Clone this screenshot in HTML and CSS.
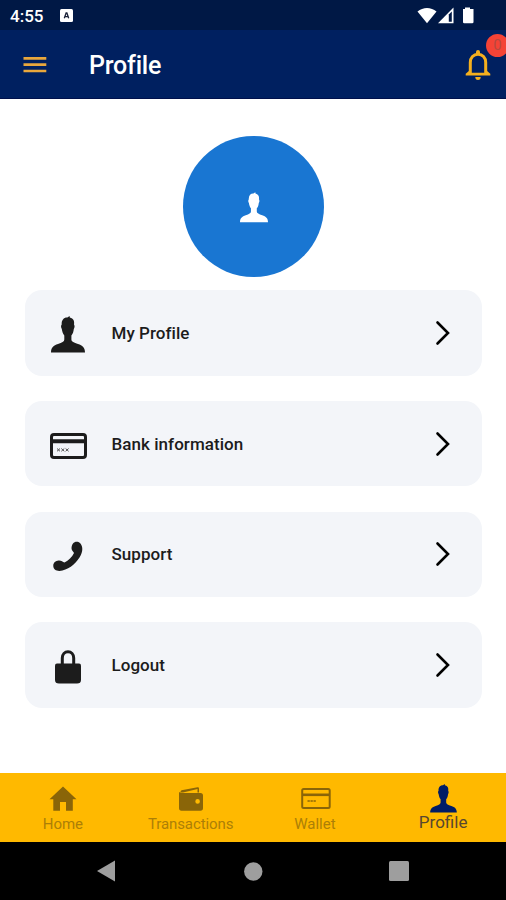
FILE: index.html
```html
<!DOCTYPE html>
<html lang="en">
<head>
    <meta charset="UTF-8">
    <meta name="viewport" content="width=device-width, initial-scale=1.0">
    <title>Profile</title>
    <link rel="stylesheet" href="styles.css">
</head>
<body>
    <!-- shared icons -->
    <svg class="icon-defs" width="0" height="0">
        <symbol id="icon-person" viewBox="0 0 34 37">
            <path d="M0 36.5C0 31.5 2.5 29.5 7 28C11 26.7 13.3 25.6 13.3 23.5V19.5C11.8 17.8 11.2 15.3 10.8 13C9.6 11 10 9.3 10.7 8.6C10.3 4 13 1.3 16.3 1.5L18.6 0L18.8 1.5C22.5 2.5 23.6 5 23 8.6C23.8 9.8 23.8 11.5 22.8 13C22.5 15.5 22 17.8 20.4 19.5V23.5C20.4 25.6 23 26.7 27 28C31.5 29.5 34 31.5 34 36.5Z"/>
        </symbol>
        <symbol id="icon-chevron" viewBox="0 0 16 26">
            <path d="M2.500 2.500L13 13L2.500 23.500" fill="none" stroke="currentColor" stroke-width="2.600" stroke-linecap="round"/>
        </symbol>
    </svg>

    <div class="status-bar">
        <span class="time">4:55</span>
        <svg class="app-badge" width="13" height="13" viewBox="0 0 13 13">
            <rect width="13" height="13" rx="1.5" fill="#fff"/>
            <path d="M4.3 9.3L6.1 4H6.9L8.7 9.3M5 7.6H8" fill="none" stroke="#1a2238" stroke-width="1.3"/>
        </svg>
        <svg class="signals" width="57" height="18" viewBox="0 0 57 18">
            <path d="M0.500 4.500C6 -0.3 14 -0.3 19.500 4.500L10 16.300Z" fill="#fff"/>
            <path d="M21 16.300L36.500 0.500V16.300Z" fill="#fff"/>
            <path d="M31.800 7.500L34.800 4.500V14.800H31.800Z" fill="#001845"/>
            <path d="M48 0.500H53V2H56.500V15Q56.500 16.300 55.200 16.300H47.200Q46 16.300 46 15V2H48Z" fill="#fff"/>
        </svg>
    </div>

    <header class="app-bar">
        <button class="menu-btn" aria-label="Menu">
            <svg width="24" height="18" viewBox="0 0 24 18">
                <path d="M0.500 2.300H23.300M0.500 8.700H23.300M0.500 15H23.300" stroke="#e9a73c" stroke-width="2.700"/>
            </svg>
        </button>
        <h1>Profile</h1>
        <button class="bell-btn" aria-label="Notifications">
            <svg width="26" height="32" viewBox="0 0 26 32">
                <path d="M5.300 25V13.500C5.300 8.700 8.500 5.200 13 5.200S20.700 8.700 20.700 13.500V25" fill="none" stroke="#f5b01e" stroke-width="3"/>
                <path d="M11 5V3Q11 1 13 1T15 3V5ZM0.700 26.600V24.700L4.500 21.500V23.700H21.500V21.500L25.300 24.700V26.600ZM10.300 28H15.700Q15.700 31 13 31T10.300 28Z" fill="#f5b01e"/>
            </svg>
            <span class="badge">0</span>
        </button>
    </header>

    <main class="content">
        <div class="avatar">
            <svg width="28" height="31"><use href="#icon-person"/></svg>
        </div>

        <div class="menu">
            <a class="menu-item">
                <span class="menu-icon"><svg width="34" height="37"><use href="#icon-person"/></svg></span>
                <span class="menu-label">My Profile</span>
                <svg class="chevron" width="16" height="26"><use href="#icon-chevron"/></svg>
            </a>
            <a class="menu-item">
                <span class="menu-icon">
                    <svg width="37" height="26" viewBox="0 0 37 26">
                        <rect x="1.500" y="1.500" width="34" height="23" rx="2.500" fill="none" stroke="currentColor" stroke-width="3"/>
                        <path d="M2 8.300H35" stroke="currentColor" stroke-width="4"/>
                        <path d="M7 15.500L10 18.300M10 15.500L7 18.300M11.300 15.500L14.300 18.300M14.300 15.500L11.300 18.300M15.600 15.500L18.600 18.300M18.600 15.500L15.600 18.300" stroke="#555" stroke-width="1"/>
                    </svg>
                </span>
                <span class="menu-label">Bank information</span>
                <svg class="chevron" width="16" height="26"><use href="#icon-chevron"/></svg>
            </a>
            <a class="menu-item">
                <span class="menu-icon">
                    <svg width="30" height="30" viewBox="0 0 30 30">
                        <path d="M20 2.500C21.500 0.300 25 0 27 2C30 5 30.300 10.500 26.500 16.500C22 23.500 14.500 29.500 6.500 29.900C3 30 0.500 28 0.300 25.200C0 22 2.500 19.700 5.500 19.500C8.500 19.300 9.500 20.800 11.500 21.500C15.500 19.700 19 16 21 12C20.500 10.500 18.500 9.800 18.500 7.300C18.500 5.300 19 4 20 2.500Z"/>
                    </svg>
                </span>
                <span class="menu-label">Support</span>
                <svg class="chevron" width="16" height="26"><use href="#icon-chevron"/></svg>
            </a>
            <a class="menu-item">
                <span class="menu-icon">
                    <svg width="26" height="34" viewBox="0 0 26 34">
                        <path d="M7.300 16V8C7.300 4.300 9.800 1.700 13 1.700S18.700 4.300 18.700 8V16" fill="none" stroke="currentColor" stroke-width="3"/>
                        <path d="M2 13.500H24Q26 13.500 26 15.500V30Q26 33.500 22 33.500H4Q0 33.500 0 30V15.500Q0 13.500 2 13.500Z"/>
                    </svg>
                </span>
                <span class="menu-label">Logout</span>
                <svg class="chevron" width="16" height="26"><use href="#icon-chevron"/></svg>
            </a>
        </div>
    </main>

    <nav class="bottom-nav">
        <a class="nav-item home">
            <svg width="28" height="26" viewBox="0 0 28 26">
                <path d="M14 0.500L27.500 13.300H23.800V24.700H17V16H11V24.700H4.300V13.300H0.500Z"/>
            </svg>
            <span>Home</span>
        </a>
        <a class="nav-item transactions">
            <svg width="26" height="26" viewBox="0 0 26 26">
                <path d="M2 6.500L3.500 4.200L19.500 1.300Q21 1 21 2.500V6.500H19.500V3L5 6.500Z"/>
                <path fill-rule="evenodd" d="M3 7H22.500Q25 7 25 9.500V22Q25 24.700 22.500 24.700H3.500Q1 24.700 1 22V6ZM19.600 13.100A2.300 2.300 0 1 0 19.600 17.700A2.300 2.300 0 1 0 19.600 13.100Z"/>
            </svg>
            <span>Transactions</span>
        </a>
        <a class="nav-item wallet">
            <svg width="30" height="26" viewBox="0 0 30 26">
                <rect x="1.200" y="3" width="27.500" height="19" rx="1.500" fill="none" stroke="currentColor" stroke-width="2"/>
                <path d="M1 8.800H29" stroke="currentColor" stroke-width="2.600"/>
                <path d="M6.500 15H15" stroke="currentColor" stroke-width="1.300" stroke-dasharray="2.300 0.700"/>
            </svg>
            <span>Wallet</span>
        </a>
        <a class="nav-item active">
            <svg width="27" height="29"><use href="#icon-person"/></svg>
            <span>Profile</span>
        </a>
    </nav>

    <div class="system-bar">
        <svg width="18" height="22" viewBox="0 0 18 22"><path d="M0 11L18 0.500V21.500Z"/></svg>
        <svg width="21" height="19" viewBox="0 0 21 19"><circle cx="11.300" cy="9.500" r="9.200"/></svg>
        <svg width="20" height="20" viewBox="0 0 20 20"><rect width="20" height="20" rx="1.500"/></svg>
    </div>
</body>
</html>
```
FILE: styles.css
```css
* {
    box-sizing: border-box;
}
body {
    font-family: Roboto, "Liberation Sans", sans-serif;
    background-color: #fff;
    color: #1c1c1c;
    margin: 0;
    height: 900px;
    display: flex;
    flex-direction: column;
    overflow: hidden;
}
svg {
    display: block;
    fill: currentColor;
    flex-shrink: 0;
}
.icon-defs {
    position: absolute;
}
button {
    padding: 0;
    border: none;
    background: none;
    cursor: pointer;
}

/* Status bar */
.status-bar {
    height: 30px;
    padding: 1px 32px 0 10px;
    background-color: #001845;
    color: #fff;
    display: flex;
    align-items: center;
}
.time {
    width: 50px;
    font-size: 17px;
    font-weight: 500;
}
.signals {
    margin-left: auto;
}

/* App bar */
.app-bar {
    height: 69px;
    padding: 2px 15px 0 23px;
    background-color: #002060;
    border-bottom: 1px solid #00104a;
    display: flex;
    align-items: center;
}
.app-bar h1 {
    margin: 2px 0 0 42px;
    color: #fff;
    font-size: 25px;
    font-weight: 500;
    line-height: 30px;
    letter-spacing: -0.2px;
}
.bell-btn {
    position: relative;
    margin-left: auto;
}
.badge {
    position: absolute;
    top: -15px;
    left: 21px;
    width: 23px;
    height: 23px;
    border-radius: 50%;
    background-color: #f44336;
    color: #b8483f;
    font-family: Roboto, sans-serif;
    font-size: 15px;
    line-height: 23px;
    text-align: center;
}

/* Content */
.content {
    flex: 1;
    padding: 37px 24px 0 25px;
}
.avatar {
    width: 141px;
    height: 141px;
    margin: 0 auto 13px;
    border-radius: 50%;
    background-color: #1976d2;
    color: #fff;
    display: flex;
    justify-content: center;
    align-items: center;
    padding-top: 2px;
}
.menu {
    display: flex;
    flex-direction: column;
    gap: 25.3px;
}
.menu-item {
    height: 85.500px;
    padding: 0 31px 0 24px;
    border-radius: 17px;
    background-color: #f3f5f9;
    display: flex;
    align-items: center;
}
.menu-icon {
    width: 38px;
    margin-right: 24.500px;
    padding-top: 4px;
    display: flex;
    justify-content: center;
}
.menu-label {
    font-size: 17px;
    font-weight: 500;
    letter-spacing: 0.05px;
}
.chevron {
    margin-left: auto;
    color: #000;
}

/* Bottom navigation */
.bottom-nav {
    height: 69px;
    background-color: #ffb900;
    color: #8a6508;
    display: flex;
}
.nav-item {
    flex: 1;
    padding-top: 13px;
    display: flex;
    flex-direction: column;
    align-items: center;
    font-size: 15px;
    line-height: 18px;
}
.nav-item span {
    margin-top: 3px;
    color: #ac7f07;
}
.nav-item.transactions {
    padding-left: 2px;
}
.nav-item.transactions span {
    letter-spacing: -0.1px;
}
.nav-item.wallet span {
    margin-right: 3px;
}
.nav-item.active {
    padding-top: 11px;
    padding-left: 1px;
    color: #001c66;
}
.nav-item.active span {
    margin-top: 0;
    color: #58472f;
    font-size: 17px;
}

/* Android buttons */
.system-bar {
    height: 58px;
    padding: 0 97px;
    background-color: #000;
    color: #9e9e9e;
    display: flex;
    justify-content: space-between;
    align-items: center;
}
```
